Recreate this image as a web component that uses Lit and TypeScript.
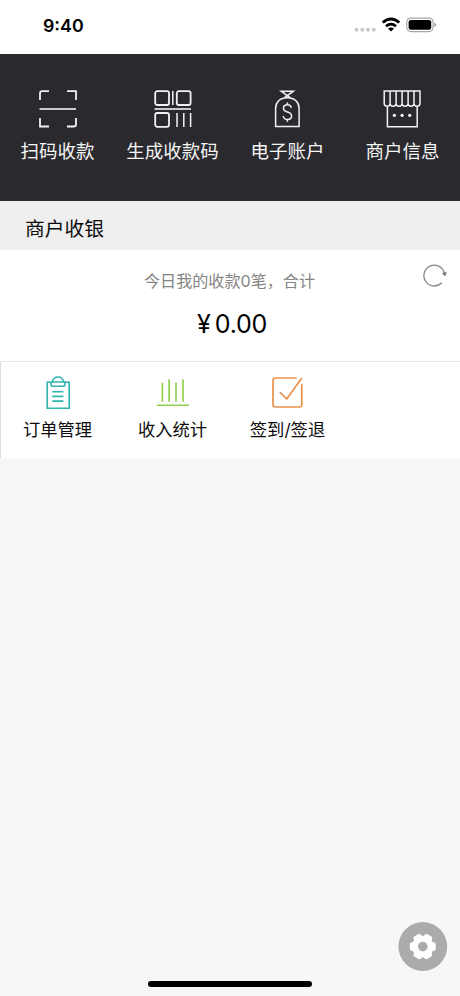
import { LitElement, html, css, svg } from "lit";
import { customElement } from "lit/decorators.js";

const icons = {
  scan: svg`<path d="M2 11V4.5Q2 2.2 4.3 2.2H11M29 2.2H38V11M2 29V37.5H11M38 29V35.2Q38 37.5 35.7 37.5H29"/><path d="M1.5 20H38" stroke="#c9c9cb" stroke-width="2"/>`,
  code: svg`<rect x="2.2" y="2.2" width="13.8" height="13.8" rx="2"/><rect x="23.8" y="2.2" width="13.8" height="13.8" rx="2"/><rect x="2.2" y="24" width="13.8" height="13.8" rx="2"/><path d="M19.8 2V16M24 24V38M30.8 24V38M37.6 24V38" stroke-width="1.5"/><path d="M1.5 20H38" stroke="#c9c9cb" stroke-width="2"/>`,
  bag: svg`<g stroke-width="1.5"><path d="M19.3 8.7C12 8.7 7.6 13.3 7.6 19.2V37.6H31.1V19.2C31.1 13.3 26.6 8.7 19.3 8.7Z"/><path d="M16.5 8.7L25.4 2.2H13.2L22.1 8.7"/><path d="M23.3 18.7C22.8 16.8 21.3 15.8 19.4 15.8C17.1 15.8 15.5 17.1 15.5 19.2C15.5 21.5 17.3 22.3 19.5 23C21.8 23.7 23.6 24.6 23.6 27C23.6 29.1 21.9 30.5 19.5 30.5C17.1 30.5 15.5 29.2 15.2 27M19.4 13.5V15.8M19.4 30.5V32.7"/></g>`,
  shop: svg`<g stroke-width="1.5"><path d="M1.2 2.1H37V14.5Q37 17.2 34 17.2Q31.2 17.2 31 14.5Q30.9 17.2 28 17.2Q25.2 17.2 25.1 14.5Q25 17.2 22 17.2Q19.2 17.2 19.1 14.5Q19 17.2 16 17.2Q13.2 17.2 13.1 14.5Q13 17.2 10 17.2Q7.2 17.2 7.1 14.5Q7 17.2 4.2 17.2Q1.2 17.2 1.2 14.5ZM7.1 2V14.5M13.1 2V14.5M19.1 2V14.5M25.1 2V14.5M31 2V14.5M4.4 17.2V37.7H34.2V17.2"/></g><g fill="#fff" stroke="none"><circle cx="11.4" cy="26.3" r="1.6"/><circle cx="19.1" cy="26.3" r="1.6"/><circle cx="26.7" cy="26.3" r="1.6"/></g>`,
  order: svg`<g stroke="#2fb5ae"><path d="M13 7.2H9.2V33.2H31.2V7.2H27"/><path d="M14.2 7C15 3.8 17 2 20 2S25 3.8 25.8 7H27V9.2Q27 11.2 25 11.2H15Q13 11.2 13 9.2V7H27"/><path d="M14.3 16.7H25.4M14.3 21.4H25.4M14.3 26.1H25.4"/></g>`,
  stats: svg`<g stroke="#8fce48" stroke-linecap="round"><path d="M9.4 8.2V26.3M16.1 4.9V26.3M23 8.2V26.3M30 4.9V26.3M4.5 30.2H35.3"/></g>`,
  check: svg`<g stroke="#e9914a" stroke-linecap="round" stroke-width="1.7"><path d="M28 3H7.4Q5 3 5 5.4V29.6Q5 32 7.4 32H31.4Q33.8 32 33.8 29.6V9.5M12.2 17.5L18.7 24L33.4 3.6"/></g>`,
};

@customElement("app-root")
export class AppRoot extends LitElement {
  static styles = css`
    :host {
      position: relative;
      display: flex;
      flex-direction: column;
      height: 996px;
      background: #f7f7f7;
      color: #0c0c0c;
      font-family: Inter, "Noto Sans CJK SC", sans-serif;
      overflow: hidden;
    }
    svg { display: block; fill: none; }
    .status {
      display: flex;
      height: 54px;
      box-sizing: border-box;
      padding: 14px 23px 0 43px;
      justify-content: space-between;
      align-items: flex-start;
      background: #fff;
    }
    .time { padding-top: 1px; font-size: 17.8px; line-height: 22px; font-weight: 600; color: #000; }
    .grid { display: grid; grid-template-columns: repeat(4, 1fr); }
    .item { display: flex; flex-direction: column; align-items: center; white-space: nowrap; }
    .primary {
      height: 147px;
      box-sizing: border-box;
      padding-top: 35px;
      background: #2a292e;
      color: #f4f4f4;
      font-size: 18.5px;
      line-height: 28px;
    }
    .primary .label { margin-top: 8px; }
    .primary svg { stroke: #f2f2f2; stroke-width: 1.8; }
    .heading {
      height: 49px;
      box-sizing: border-box;
      padding: 2px 25px 0;
      line-height: 53px;
      font-size: 19.8px;
      background: #efefef;
    }
    .summary {
      position: relative;
      height: 111px;
      background: #fff;
      text-align: center;
    }
    .caption { padding: 19px 1px 0 0; line-height: 24px; font-size: 16.1px; color: #858585; }
    .amount {
      margin: 14px 0 0 4px;
      line-height: 34px;
      font-size: 25px;
      color: #000;
      display: flex;
      justify-content: center;
      gap: 4px;
    }
    .digits { letter-spacing: -0.3px; }
    .refresh { position: absolute; right: 12px; top: 13px; }
    .secondary {
      height: 97px;
      box-sizing: border-box;
      padding-top: 13px;
      border-top: 1px solid #e6e6e6;
      box-shadow: inset 1px 0 #dedede;
      background: #fff;
      font-size: 17.3px;
      line-height: 26px;
    }
    .secondary svg { stroke-width: 1.6; }
    .secondary .label { margin-top: 6px; }
    .fab { position: absolute; left: 398px; top: 922px; }
    .home {
      position: absolute;
      left: 148px;
      top: 981px;
      width: 164px;
      height: 6px;
      border-radius: 3px;
      background: #000;
    }
  `;

  private item(icon: unknown, label: string, height: number) {
    return html`<div class="item">
      <svg width="39" height=${height} viewBox="0 0 39 ${height}">${icon}</svg>
      <div class="label">${label}</div>
    </div>`;
  }

  render() {
    return html`
      <div class="status">
        <span class="time">9:40</span>
        <svg width="83" height="22" viewBox="354 14 83 22">
          <g fill="#c9c9c9">
            <rect x="354.7" y="28" width="3.6" height="3.6" rx="1" /><rect x="360.5" y="28" width="3.6" height="3.6" rx="1" />
            <rect x="366.2" y="28" width="3.6" height="3.6" rx="1" /><rect x="372" y="28" width="3.6" height="3.6" rx="1" />
          </g>
          <g stroke="#000" stroke-width="2.7">
            <path d="M382.7 22.6Q391 15.4 399.3 22.6M386 26.2Q391 22 396 26.2" />
          </g>
          <path d="M388 28.6Q391 26.2 394 28.6L391 31.4Z" fill="#000" />
          <rect x="406.8" y="18.1" width="26.3" height="13.5" rx="4" stroke="#a6a6a6" stroke-width="1.2" />
          <rect x="408.6" y="19.9" width="22.6" height="9.9" rx="2.3" fill="#000" />
          <path d="M434.5 22.7Q436.2 23.3 436.2 24.8T434.5 26.9Z" fill="#999" />
        </svg>
      </div>
      <div class="grid primary">
        ${this.item(icons.scan, "扫码收款", 40)} ${this.item(icons.code, "生成收款码", 40)}
        ${this.item(icons.bag, "电子账户", 40)} ${this.item(icons.shop, "商户信息", 40)}
      </div>
      <div class="heading">商户收银</div>
      <div class="summary">
        <div class="caption">今日我的收款0笔，合计</div>
        <div class="amount"><span>¥</span><span class="digits">0.00</span></div>
        <svg class="refresh" width="26" height="26" viewBox="422 263 26 26">
          <path d="M441.8 282.8A10.4 10.4 0 1 1 444.4 273" stroke="#8a8a8a" stroke-width="1.3" />
          <path d="M442 273.2L446.8 271.8L445.2 276.6Z" fill="#777" />
        </svg>
      </div>
      <div class="grid secondary">
        ${this.item(icons.order, "订单管理", 36)} ${this.item(icons.stats, "收入统计", 36)}
        ${this.item(icons.check, "签到/签退", 36)}
      </div>
      <svg class="fab" width="50" height="50" viewBox="-25 -25 50 50">
        <circle cx="-0.2" cy="-0.5" r="24.4" fill="#ababab" />
        <g transform="translate(-0.2 -0.4)">
          <g fill="#fff">
            <circle r="10.8" />
            ${[0, 60, 120].map(
              (a) => svg`<rect x="-13" y="-4.4" width="26" height="8.8" rx="2.4" transform="rotate(${a})" />`
            )}
          </g>
          <circle r="4.8" fill="#ababab" />
        </g>
      </svg>
      <div class="home"></div>
    `;
  }
}
